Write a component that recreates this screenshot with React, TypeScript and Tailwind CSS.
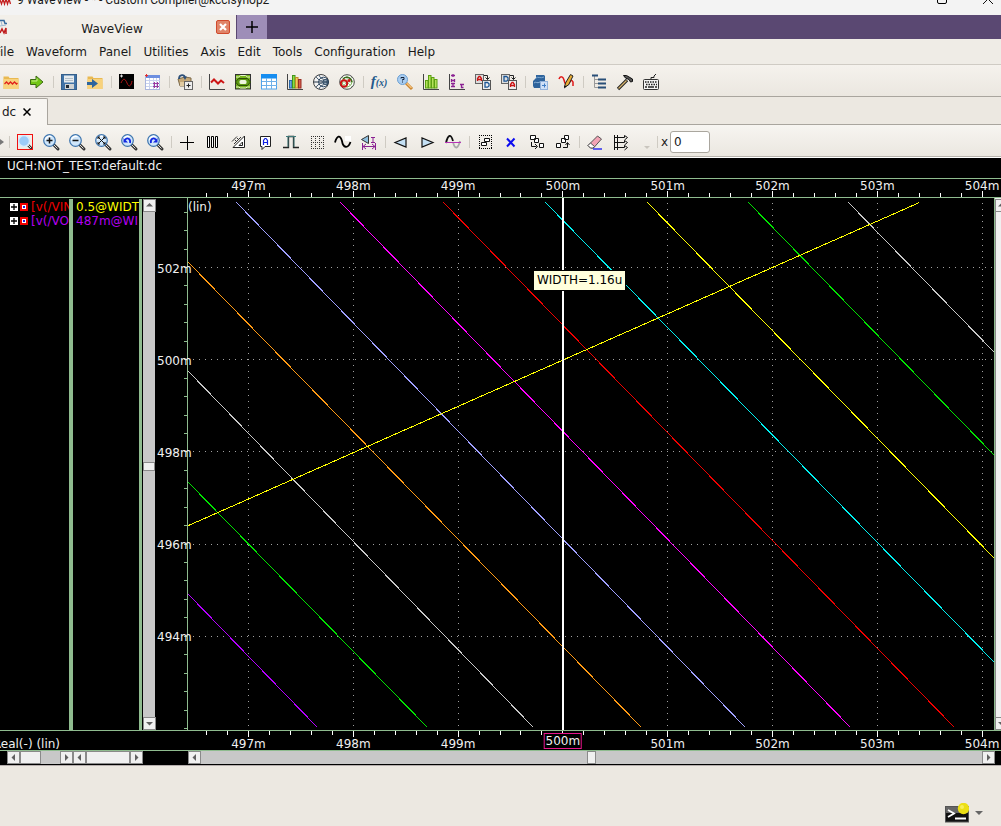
import React from "react";

type IconProps = { children: React.ReactNode };

function Icon({ children }: IconProps) {
  return (
    <svg viewBox="0 0 16 16" className="h-4 w-4 overflow-visible" fill="none" aria-hidden="true">
      {children}
    </svg>
  );
}

function Lens({ children }: { children?: React.ReactNode }) {
  return (
    <Icon>
      <path d="M10 10l5 5" stroke="#333" strokeWidth="3" strokeLinecap="round" />
      <path d="M10.5 10.5l4 4" stroke="#ddd" strokeWidth="1" />
      <circle cx="6.5" cy="6.5" r="5.8" fill="#cfe6fb" stroke="#3d74ad" strokeWidth="1.2" />
      <path d="M2.5 6a4.2 4.2 0 0 1 6-3.3" stroke="#fff" strokeWidth="1.4" />
      {children}
    </Icon>
  );
}

const folder = (
  <>
    <path d="M0.5 3V2.5h5l1 1.5H15.5V15H.5z" fill="#e9b951" />
    <path d="M0.5 5h15v10H.5z" fill="#f8d27c" />
  </>
);

const bars = (colors: string[], stroke: string[]) => (
  <Icon>
    <path d="M.5 0v15.5H16" stroke="#444" />
    <rect x="2.5" y="6.5" width="2.5" height="7.5" fill={colors[0]} stroke={stroke[0]} />
    <rect x="5.5" y="1.5" width="2.5" height="12.5" fill={colors[1]} stroke={stroke[1]} />
    <rect x="8.5" y="3.5" width="2.5" height="10.5" fill={colors[2]} stroke={stroke[2]} />
    <rect x="11.5" y="5.5" width="2.5" height="8.5" fill={colors[3]} stroke={stroke[3]} />
  </Icon>
);

const letterA = "M0 4.5V2L1.5 0h1L4 2v2.5M0 3h4";
const letterD = "M0 0h2.5L4 1.2v2.3L2.5 4.7H0z";

type Tool = { label: string; icon: React.ReactNode } | null;

const mainTools: Tool[] = [
  {
    label: "Open waveform",
    icon: (
      <Icon>
        {folder}
        <path d="M1.5 10l2-2 2 2 2-2 2 2 2-2 2 2 1-1" stroke="#e0201c" strokeWidth="1.3" />
      </Icon>
    ),
  },
  {
    label: "Import",
    icon: (
      <Icon>
        <path d="M1.5 5.5H7V2l7 6-7 6v-3.5H1.5z" fill="#73c716" stroke="#3d6b12" />
        <path d="M2.5 7H8V4.5" stroke="#c7f088" />
      </Icon>
    ),
  },
  null,
  {
    label: "Save",
    icon: (
      <Icon>
        <rect x=".5" y=".5" width="15" height="15" fill="#3f72a6" stroke="#355f8b" />
        <rect x="3" y="1.5" width="10" height="7" fill="#e6ebee" />
        <path d="M4 4.5h8M4 6.5h8" stroke="#b2bfc9" />
        <rect x="4" y="10" width="9" height="5" fill="#cfd2d2" />
        <rect x="5" y="11" width="3" height="3" fill="#202a35" />
      </Icon>
    ),
  },
  {
    label: "Load session",
    icon: (
      <Icon>
        {folder}
        <path d="M0 8h5V5l6 4.5L5 14v-3H0z" fill="#2e659d" />
      </Icon>
    ),
  },
  null,
  {
    label: "New waveview",
    icon: (
      <Icon>
        <rect x="0" y="0" width="15" height="15" fill="#000" />
        <path d="M1 2h3M2.5 .5v3" stroke="#ddd" />
        <path d="M2 9c2-5 4-5 6 0s4 3 5-2" stroke="#b01616" />
      </Icon>
    ),
  },
  {
    label: "New table",
    icon: (
      <Icon>
        <rect x=".5" y="1.5" width="14" height="14" fill="#fff" stroke="#aab5dd" />
        <rect x="1" y="1" width="14" height="3" fill="#6d8fe0" />
        <path d="M1 6.5h14M1 9.5h14M1 12.5h14M4.5 4v11M8.5 4v11M11.5 4v11" stroke="#c9d2ee" />
        <path d="M8 9.5h6M8 12.5h6M9.5 8v6M12.5 8v6" stroke="#9b3aa0" />
        <path d="M0 1.5h3M1.5 0v3" stroke="#e03030" />
      </Icon>
    ),
  },
  null,
  {
    label: "Add library",
    icon: (
      <Icon>
        <path d="M1 5l7-2 6 1v8H3z" fill="#c5a877" stroke="#7d6a4b" />
        <path d="M2 5C2 0 8 0 8 4" stroke="#2e5078" strokeWidth="1.8" />
        <path d="M6 2.500h4L8 6z" fill="#2e5078" />
        <path d="M3 8h6v4H3z" fill="#e1cba2" />
        <rect x="7.500" y="7.500" width="8" height="8" fill="#eee" stroke="#666" />
        <path d="M9.500 11.500h4M11.500 9.500v4" stroke="#222" />
      </Icon>
    ),
  },
  null,
  {
    label: "XY plot",
    icon: (
      <Icon>
        <path d="M.5 0v15.500H16" stroke="#444" />
        <path d="M2 8.500l3-3 4 4 3-3 3 2.500" stroke="#cc1515" strokeWidth="2" />
      </Icon>
    ),
  },
  {
    label: "Eye diagram",
    icon: (
      <Icon>
        <rect x=".5" y=".5" width="15" height="14.500" fill="#76b51c" stroke="#333" />
        <path d="M1 3h2.500l2-1.500h5l2 1.500H15M1 13h2.500l2 1h5l2-1H15" stroke="#e9f6cd" />
        <path d="M.5 8l3-3.500h9l3 3.500-3 3.500h-9z" fill="#5d9912" stroke="#2e4f08" />
        <rect x="4.500" y="6" width="7" height="4" rx="1.500" fill="#eef6dd" />
      </Icon>
    ),
  },
  {
    label: "Data table",
    icon: (
      <Icon>
        <rect x=".5" y="1" width="15" height="14" fill="#fff" stroke="#4fa4ec" />
        <rect x="0" y="0" width="16" height="4.500" fill="#168df0" />
        <path d="M1 7.500h15M1 11.500h15M5.500 4v11M10.500 4v11" stroke="#6fb1e8" />
      </Icon>
    ),
  },
  {
    label: "Histogram",
    icon: bars(["#6fa7de", "#8edb48", "#f5c863", "#d35c4f"], ["#2b67a8", "#43941a", "#c08d27", "#982c22"]),
  },
  {
    label: "Smith chart",
    icon: (
      <Icon>
        <circle cx="8" cy="8" r="7.500" fill="#f4f4f4" stroke="#444" />
        <path d="M.5 8h15" stroke="#234" />
        <circle cx="10.500" cy="8" r="4.800" stroke="#24405c" />
        <circle cx="12.500" cy="8" r="2.500" fill="#c7d6e4" stroke="#24405c" />
        <path d="M3 2.500c2 4 6 5 12 5M3 13.500c2-4 6-5 12-5M6 1c1 3 4 5 9 5M6 15c1-3 4-5 9-5" stroke="#3a5268" />
      </Icon>
    ),
  },
  {
    label: "Polar chart",
    icon: (
      <Icon>
        <circle cx="8" cy="8" r="7.300" fill="#fff" stroke="#4b4b4b" />
        <circle cx="8" cy="8" r="4.800" stroke="#6dac45" />
        <path d="M8 1v14M1 8h14M3 3l10 10M13 3L3 13" stroke="#a8c894" />
        <path d="M4 5c3-3 8-2 9 3" stroke="#3d6b20" strokeWidth="1.500" />
        <circle cx="5" cy="9.500" r="3.200" stroke="#cc1414" strokeWidth="2" />
        <circle cx="10" cy="6.500" r="1.500" fill="#cc1414" />
      </Icon>
    ),
  },
  null,
  {
    label: "Function",
    icon: (
      <span className="font-['Liberation_Serif',serif] text-[15px] font-bold leading-4 text-[#245a8c] italic" aria-hidden="true">
        f<span className="text-[10px]">(x)</span>
      </span>
    ),
  },
  {
    label: "Query",
    icon: (
      <Icon>
        <path d="M9 9l6 6" stroke="#c9822b" strokeWidth="3" />
        <path d="M9.500 9l5 5" stroke="#f6c37f" strokeWidth="1.300" />
        <circle cx="5.500" cy="5.500" r="5" fill="#a9cdf1" stroke="#6b9fd2" />
        <path d="M4 4.500V3.500h3v2H5.500v1M5.500 7.500v1" stroke="#14233a" />
      </Icon>
    ),
  },
  {
    label: "Spectrum",
    icon: bars(["#b5e25c", "#b5e25c", "#b5e25c", "#b5e25c"], ["#5ba012", "#5ba012", "#5ba012", "#5ba012"]),
  },
  {
    label: "Time constants",
    icon: (
      <Icon>
        <path d="M.5 0v15.500H16" stroke="#444" />
        <path d="M2 1.500h4M4 0v3M2.500 5v3M5.500 5v3M2.500 6.500h3M2 9.500h4M4 9v4M2 12.500h4" stroke="#8b2192" strokeWidth="1.300" />
        <path d="M11 10.500h4M12.500 10.500v3h2" stroke="#8b2192" strokeWidth="1.300" />
      </Icon>
    ),
  },
  {
    label: "Analog to digital",
    icon: (
      <Icon>
        <rect x=".5" y=".5" width="8" height="9" fill="#ddd" stroke="#666" />
        <g transform="translate(2.5 2.5)">
          <path d={letterA} stroke="#cc1414" strokeWidth="1.300" />
        </g>
        <path d="M9 1.500h3.500v4M10.500 3.500l2 2 2-2" stroke="#222" />
        <rect x="7.500" y="6.500" width="8" height="9" fill="#eee" stroke="#555" />
        <g transform="translate(10 8.5)">
          <path d={letterD} stroke="#1a5595" strokeWidth="1.300" />
        </g>
      </Icon>
    ),
  },
  {
    label: "Digital to analog",
    icon: (
      <Icon>
        <rect x=".5" y=".5" width="8" height="9" fill="#ddd" stroke="#666" />
        <g transform="translate(3 2.5)">
          <path d={letterD} stroke="#1a5595" strokeWidth="1.300" />
        </g>
        <path d="M9 1.500h3.500v4M10.500 3.500l2 2 2-2" stroke="#222" />
        <rect x="7.500" y="6.500" width="8" height="9" fill="#eee" stroke="#555" />
        <g transform="translate(9.5 8.5)">
          <path d={letterA} stroke="#cc1414" strokeWidth="1.300" />
        </g>
      </Icon>
    ),
  },
  null,
  {
    label: "Export view",
    icon: (
      <Icon>
        <path d="M3 1h8l1 1v7l-3 5H1l-1-2V7l3-3z" fill="#2f649c" />
        <path d="M3 4c2-2 4 1 8-1" stroke="#7ba6d0" />
        <path d="M1 9c2-2 3 1 6-1" stroke="#8fb5da" />
        <rect x="7.500" y="7.500" width="7" height="8" fill="#cfe0f7" stroke="#94b2da" />
        <path d="M9 11.500h4M11.500 9.500v4" stroke="#3f7cc4" />
      </Icon>
    ),
  },
  {
    label: "Edit waveform",
    icon: (
      <Icon>
        <path d="M0 5c1-3 4-3 5 1s2 5 4 4 3-6 5-2v4" stroke="#e01818" strokeWidth="1.500" />
        <path d="M5.500 13l1-4 5-8.500 2.500 1.500-4.500 9z" fill="#e8ad36" stroke="#222" />
        <path d="M5 14.500l.5-3 2.500 1z" fill="#111" />
      </Icon>
    ),
  },
  null,
  {
    label: "Tree",
    icon: (
      <Icon>
        <path d="M3.500 2v11.500H7M3.500 5.500H7M3.500 9.500H7" stroke="#999" />
        <path d="M1 1.500h6M7 5.500h8M7 9.500h8M7 13.500h8" stroke="#294f78" strokeWidth="2" />
      </Icon>
    ),
  },
  {
    label: "Hammer",
    icon: (
      <Icon>
        <path d="M1 15l9-9" stroke="#222" strokeWidth="3.200" />
        <path d="M1.500 14.500l8-8" stroke="#d7b36c" strokeWidth="1.300" />
        <path d="M6.500 1.500h3l6 3.500v2.500l-2 .5-1.500-2.500L8.500 4z" fill="#555" stroke="#111" />
      </Icon>
    ),
  },
  {
    label: "Keyboard",
    icon: (
      <Icon>
        <path d="M8 5V3.500h3V2l2-2" stroke="#222" />
        <rect x=".5" y="5.500" width="15" height="10" rx="1" fill="#f4f4f4" stroke="#333" />
        <path d="M2 8h12M3 10.500h11" stroke="#222" strokeWidth="1.500" strokeDasharray="1.500 1" />
        <path d="M2 13h2M5 13h6M12 13h2" stroke="#222" strokeWidth="1.500" />
      </Icon>
    ),
  },
];

const viewTools: Tool[] = [
  null,
  {
    label: "Zoom box",
    icon: (
      <Icon>
        <path d="M10 10l5 5" stroke="#333" strokeWidth="2.500" />
        <path d="M10.500 10.500l3.500 3.500" stroke="#ddd" />
        <circle cx="7" cy="7" r="5.500" fill="#9ccbf8" stroke="#d9ebfb" strokeWidth="1.500" />
        <rect x=".5" y=".5" width="15" height="15" stroke="#f01010" />
      </Icon>
    ),
  },
  { label: "Zoom in", icon: <Lens><path d="M3.500 6.500h6M6.500 3.500v6" stroke="#111" strokeWidth="1.500" /></Lens> },
  { label: "Zoom out", icon: <Lens><path d="M3.500 6.500h6" stroke="#111" strokeWidth="1.500" /></Lens> },
  {
    label: "Zoom fit",
    icon: (
      <Lens>
        <path d="M3 3l7 7M10 3l-7 7M3 5V3h2M8 3h2v2M10 8v2H8M5 10H3V8" stroke="#111" />
      </Lens>
    ),
  },
  {
    label: "Previous zoom",
    icon: (
      <Lens>
        <path d="M4 6c2-3 6-1.500 5 3" stroke="#1226e0" strokeWidth="1.800" />
        <path d="M2.500 4v4.500H7z" fill="#1226e0" />
      </Lens>
    ),
  },
  {
    label: "Next zoom",
    icon: (
      <Lens>
        <path d="M9 6C7 3 3 4.500 4 9" stroke="#1226e0" strokeWidth="1.800" />
        <path d="M10.500 4v4.500H6z" fill="#1226e0" />
      </Lens>
    ),
  },
  null,
  { label: "Cursor", icon: <Icon><path d="M1 8.500h14M8.500 1.500v14" stroke="#000" shapeRendering="crispEdges" /></Icon> },
  {
    label: "Columns",
    icon: (
      <Icon>
        <path d="M2.500 2.500h2v11h-2zM6.500 2.500h2v11h-2zM10.500 2.500h2v11h-2z" fill="#fff" stroke="#000" />
      </Icon>
    ),
  },
  {
    label: "Measure",
    icon: (
      <Icon>
        <path d="M2 13.500h11.500V2z" fill="#fff" stroke="#222" />
        <path d="M8 11.500h3.500V8z" stroke="#222" />
        <path d="M1 7.500l5-5M3 10l7-7M4 6l2 2M6 4l2 2" stroke="#333" />
      </Icon>
    ),
  },
  {
    label: "Annotate",
    icon: (
      <Icon>
        <path d="M3.500 2.500h10v10H8l-3 3v-3H3.500z" fill="#fff" stroke="#222" />
        <path d="M6.500 11V6.500L8 4.500h1l1.500 2V11M6.500 8.500h4" stroke="#1020e0" strokeWidth="1.200" />
      </Icon>
    ),
  },
  {
    label: "Pulse",
    icon: (
      <Icon>
        <path d="M0 13.500h5.500V2.500h5v11H16" stroke="#222" strokeWidth="1.300" />
        <path d="M3 2.500h10M5 2v11M11 2v11" stroke="#407878" />
      </Icon>
    ),
  },
  {
    label: "Grid",
    icon: (
      <Icon>
        <path d="M2 2.500h14M2 8.500h14M2 14.500h14" stroke="#333" strokeDasharray="1 1" shapeRendering="crispEdges" />
        <path d="M2 4.500h14M2 6.500h14M2 10.500h14M2 12.500h14" stroke="#333" strokeDasharray="1 3" shapeRendering="crispEdges" />
      </Icon>
    ),
  },
  {
    label: "Sine",
    icon: (
      <Icon>
        <rect x="10" y="2" width="6" height="5" fill="#fff" />
        <path d="M0 8.500c2-7 5-8 7-1.500 1 7 6 8 8.500 1" stroke="#000" strokeWidth="1.800" />
      </Icon>
    ),
  },
  {
    label: "Marker distance",
    icon: (
      <Icon>
        <path d="M.5 5.500l7-4v8z" fill="#8fc0e0" stroke="#333" />
        <path d="M10 3.500h4M12 3.500v5M10 8.500h4" stroke="#8b2192" />
        <path d="M1.500 9v7M14.500 9v7M2 12.500h12M5 10l-3 2.500L5 15M11 10l3 2.500-3 2.500" stroke="#8b2192" />
      </Icon>
    ),
  },
  null,
  { label: "Previous edge", icon: <Icon><path d="M2 8.500L13 4v9z" fill="#c4e0f4" stroke="#111" strokeWidth="1.200" /></Icon> },
  { label: "Next edge", icon: <Icon><path d="M14 8.500L3 4v9z" fill="#c4e0f4" stroke="#111" strokeWidth="1.200" /></Icon> },
  {
    label: "Level",
    icon: (
      <Icon>
        <path d="M1 9C3 0 6 0 8 7" stroke="#111" strokeWidth="1.800" />
        <path d="M8 8c2 8 5 7 7-1" stroke="#aaa" strokeWidth="1.800" />
        <path d="M0 8.500h16" stroke="#b832b8" />
      </Icon>
    ),
  },
  null,
  {
    label: "Select group",
    icon: (
      <Icon>
        <path d="M2 1.500h13M2 14.500h13M2.500 1v14M14.500 1v14" stroke="#000" strokeDasharray="1 1" shapeRendering="crispEdges" />
        <path d="M7.500 4.500h5v3h-5zM4.500 8.500h5v3h-5z" fill="#fff" stroke="#111" />
      </Icon>
    ),
  },
  { label: "Delete", icon: <Icon><path d="M4 4.500l7.500 8M11.500 4.500l-7.500 8" stroke="#0c0cf0" strokeWidth="2" /></Icon> },
  {
    label: "Group",
    icon: (
      <Icon>
        <path d="M1.500 1.500h5v4h-5zM5.500 4.500h4v4h-4zM10.500 9.500h4v4h-4z" fill="#fff" stroke="#111" />
        <path d="M2.500 8v4.500h5M6 10l2.500 2.500L6 15" stroke="#111" />
      </Icon>
    ),
  },
  {
    label: "Ungroup",
    icon: (
      <Icon>
        <path d="M9.500 1.500h4v4h-4zM6.500 4.500h4v4h-4zM1.500 9.500h4v4h-4z" fill="#fff" stroke="#111" />
        <path d="M8 13.500h4.500V9M10.500 11l2-2.500 2 2.500" stroke="#111" />
      </Icon>
    ),
  },
  null,
  {
    label: "Erase",
    icon: (
      <Icon>
        <path d="M1 11.500L10.500 2l4 3-8 9H3.500z" fill="#f3a3b4" stroke="#555" />
        <path d="M1 11.500l2.500-2.500 4 3.500-1.500 1.500H3.500z" fill="#fff" stroke="#555" />
        <path d="M6 15h9" stroke="#1414f0" strokeWidth="1.300" />
      </Icon>
    ),
  },
  {
    label: "Bus",
    icon: (
      <Icon>
        <path d="M1.500 1v15M4.500 1v15" stroke="#111" />
        <path d="M1 3.500h10.500V1.500l3 2-3 2.500M1 8.500h10.500v-2l3 2-3 2.500M1 13.500h10.500v-2l3 2-3 2.500" stroke="#111" />
      </Icon>
    ),
  },
];

function Tools({ tools }: { tools: Tool[] }) {
  return (
    <>
      {tools.map((tool, i) =>
        tool ? (
          <button key={i} type="button" aria-label={tool.label} className="flex h-6 w-[26px] shrink-0 items-center justify-center">
            {tool.icon}
          </button>
        ) : (
          <Divider key={i} />
        ),
      )}
    </>
  );
}

function Divider() {
  return (
    <span className="flex h-3 w-[6px] shrink-0 justify-center">
      <span className="w-px bg-[#cfcbc3]" />
    </span>
  );
}

const PLOT_W = 806;
const PLOT_H = 532;
const xLabels = ["497m", "498m", "499m", "500m", "501m", "502m", "503m", "504m"];
const yLabels = ["502m", "500m", "498m", "496m", "494m"];
const xStep = 104.8;
const yStep = 92.2;
const xAt = (i: number) => 60.5 + i * xStep;
const yAt = (i: number) => 69.5 + i * yStep;
const xMinor = Array.from({ length: 39 }, (_, i) => i - 2).filter((i) => i <= 35);
const yMinor = Array.from({ length: 29 }, (_, i) => i - 3).filter((i) => yAt(i / 5) < PLOT_H);

const traces: [string, number, number, number, number][] = [
  ["#b400ff", 0, 396, 129, 529],
  ["#00e400", 0, 284, 239, 529],
  ["#c8c8c8", 0, 173, 345, 529],
  ["#ff9a14", 0, 64, 453, 529],
  ["#a0a0ff", 48, 4, 557, 529],
  ["#ff00ff", 152, 4, 662, 529],
  ["#f00000", 255, 4, 766, 529],
  ["#00f0f0", 357, 4, 806, 464],
  ["#ffff00", 459, 4, 806, 360],
  ["#00e400", 560, 4, 806, 257],
  ["#c8c8c8", 660, 4, 806, 154],
  ["#ffff00", 0, 327, 731, 4],
];

function Plot() {
  return (
    <svg
      viewBox={`0 0 ${PLOT_W} ${PLOT_H}`}
      preserveAspectRatio="none"
      className="absolute inset-0 h-full w-full"
      shapeRendering="crispEdges"
      role="img"
      aria-label="DC sweep waveforms"
    >
      {xLabels.map((_, i) => (
        <path key={i} d={`M${Math.floor(xAt(i)) + 0.5} 5V528`} stroke="#a0a0a0" strokeDasharray="1 5" />
      ))}
      {yLabels.map((_, i) => (
        <path key={i} d={`M5 ${Math.floor(yAt(i)) + 0.5}H806`} stroke="#a0a0a0" strokeDasharray="1 5" />
      ))}
      {traces.map(([color, x1, y1, x2, y2], i) => (
        <line key={i} x1={x1 + 0.5} y1={y1 + 0.5} x2={x2 + 0.5} y2={y2 + 0.5} stroke={color} />
      ))}
      <rect x="374" y="0" width="2" height={PLOT_H} fill="#fff" />
    </svg>
  );
}

function XAxis({ bottom = false }: { bottom?: boolean }) {
  return (
    <div className="relative mr-[7px] min-w-0 flex-1">
      <svg
        viewBox={`0 0 ${PLOT_W} 6`}
        preserveAspectRatio="none"
        className={`absolute left-0 h-[6px] w-full ${bottom ? "top-0" : "bottom-0"}`}
        shapeRendering="crispEdges"
        aria-hidden="true"
      >
        {xMinor.map((i) => {
          const len = i % 5 === 0 ? 6 : 4;
          return (
            <rect key={i} x={Math.floor(xAt(i / 5))} y={bottom ? 0 : 6 - len} width="1" height={len} fill="#fff" />
          );
        })}
      </svg>
      {xLabels.map((label, i) => {
        const marked = bottom && label === "500m";
        return (
          <span
            key={label}
            className={`absolute -translate-x-1/2 leading-[14px] ${
              marked
                ? "top-[2px] border border-[#e8148c] bg-black px-px"
                : bottom
                  ? "top-[6px]"
                  : "top-0"
            }`}
            style={{ left: `${(xAt(i) / PLOT_W) * 100}%` }}
          >
            {label}
          </span>
        );
      })}
    </div>
  );
}

function YAxis() {
  return (
    <div className="relative z-10 w-[33px] shrink-0 border-r border-[#8fbc8f]">
      <svg
        viewBox={`0 0 3 ${PLOT_H}`}
        preserveAspectRatio="none"
        className="absolute right-0 top-0 h-full w-[3px]"
        shapeRendering="crispEdges"
        aria-hidden="true"
      >
        {yMinor.map((i) => (
          <rect key={i} x="0" y={Math.floor(yAt(i / 5))} width="3" height="1" fill="#8fbc8f" />
        ))}
      </svg>
      {yLabels.map((label, i) => (
        <span
          key={label}
          className="absolute left-0.5 -translate-y-1/2 leading-[14px]"
          style={{ top: `${((yAt(i) + 1) / PLOT_H) * 100}%` }}
        >
          {label}
        </span>
      ))}
    </div>
  );
}

const arrowPaths = {
  up: "M2 6.500h7L5.500 3z",
  down: "M2 4h7L5.500 7.500z",
  left: "M7 2v7L3.500 5.500z",
  right: "M4 2v7l3.500-3.500z",
};

function ArrowButton({ dir }: { dir: keyof typeof arrowPaths }) {
  return (
    <button
      type="button"
      aria-label={`Scroll ${dir}`}
      className="flex h-[13px] w-[13px] shrink-0 items-center justify-center border border-[#8a8a8a] bg-[#f0f0f0]"
    >
      <svg viewBox="0 0 11 11" className="h-[11px] w-[11px] shrink-0" aria-hidden="true">
        <path d={arrowPaths[dir]} fill="#606060" />
      </svg>
    </button>
  );
}

const signals = [
  { name: "[v(/VIN", value: "0.5@WIDT", nameColor: "text-[#f00000]", valueColor: "text-[#ffff00]" },
  { name: "[v(/VOU", value: "487m@WI", nameColor: "text-[#b400f0]", valueColor: "text-[#b400f0]" },
];

function SignalPane() {
  return (
    <div className="flex w-[155px] shrink-0 pt-px">
      <div className="w-[69px] shrink-0 overflow-hidden pl-[10px] pt-px">
        {signals.map((s) => (
          <div key={s.name} className={`flex h-[14px] items-center whitespace-nowrap ${s.nameColor}`}>
            <button type="button" aria-label={`Expand ${s.name}`} className="shrink-0">
              <svg viewBox="0 0 8 8" className="h-2 w-2" aria-hidden="true">
                <rect width="8" height="8" fill="#fff" />
                <path d="M1 4h6M4 1v6" stroke="#000" strokeWidth="1.300" />
              </svg>
            </button>
            <svg viewBox="0 0 8 8" className="ml-0.5 mr-[3px] h-2 w-2 shrink-0" aria-hidden="true">
              <rect width="8" height="8" fill="#f00000" />
              <rect x="2" y="2" width="4" height="4" fill="#fff" />
              <rect x="3" y="3" width="2" height="2" fill="#2020e0" />
            </svg>
            <span className="leading-[14px]">{s.name}</span>
          </div>
        ))}
      </div>
      <div className="w-1 shrink-0 bg-[#8fbc8f]" />
      <div className="w-[66px] shrink-0 overflow-hidden pl-[3px] pt-px">
        {signals.map((s) => (
          <div key={s.value} className={`h-[14px] whitespace-nowrap leading-[14px] ${s.valueColor}`}>
            {s.value}
          </div>
        ))}
      </div>
      <div className="w-[3px] shrink-0 bg-[#8fbc8f]" />
      <div className="ml-px flex w-3 flex-col bg-[#c8c8c8]">
        <ArrowButton dir="up" />
        <div className="flex flex-1 flex-col justify-center pt-1">
          <div className="h-[9px] border border-[#8a8a8a] bg-[#f0f0f0]" />
        </div>
        <ArrowButton dir="down" />
      </div>
    </div>
  );
}

function Thumb({ className }: { className: string }) {
  return <div className={`h-[13px] shrink-0 border border-[#8a8a8a] bg-[#f0f0f0] ${className}`} />;
}

const menus = ["File", "Waveform", "Panel", "Utilities", "Axis", "Edit", "Tools", "Configuration", "Help"];

export default function App() {
  return (
    <div className="flex h-screen flex-col overflow-hidden bg-[#ece8e1] font-['DejaVu_Sans',sans-serif] text-[12px] text-[#1a1a1a]">
      <header className="flex h-[15px] shrink-0 items-start overflow-hidden bg-[#f3f3f3] pr-2">
        <svg viewBox="0 0 12 12" className="-mt-1 h-3 w-3 shrink-0" fill="none" aria-hidden="true">
          <path d="M0 4l1.500 4L3 3l1.500 5L6 3l1.500 5L9 3l1.500 5" stroke="#c42020" strokeWidth="1.300" />
        </svg>
        <h1 className="-mt-2 ml-[5px] flex-1 whitespace-nowrap font-['Roboto',sans-serif] text-[12px] leading-[16px]">
          9 WaveView - * - Custom Compiler@kcclsynop2
        </h1>
        <button type="button" aria-label="Maximize" className="-mt-[6px] mr-9 h-[10px] w-[10px] rounded-[2px] border border-black" />
        <button type="button" aria-label="Close window" className="-mt-[6px]">
          <svg viewBox="0 0 10 10" className="h-[10px] w-[10px]" aria-hidden="true">
            <path d="M0 0l10 10M10 0L0 10" stroke="#111" />
          </svg>
        </button>
      </header>

      <div className="flex h-6 shrink-0 bg-[#5a4872]">
        <div className="flex w-[236px] items-center bg-[#f2efe9] pr-[6px]">
          <svg viewBox="0 0 8 16" className="h-4 w-2 shrink-0" fill="none" aria-hidden="true">
            <path d="M0 1.500h4l1 3h2" stroke="#356a9e" strokeWidth="1.500" />
            <path d="M1 2l1 4M0 7l6-1" stroke="#9bb7d0" />
            <path d="M0 14l2-4 2 4 2-5v6" stroke="#c01c1c" strokeWidth="1.500" />
          </svg>
          <span className="flex-1 pt-1 text-center">WaveView</span>
          <button type="button" aria-label="Close WaveView" className="flex h-[14px] w-[14px] items-center justify-center rounded-[2px] border border-[#d04a2c] bg-[#e08468]">
            <svg viewBox="0 0 8 8" className="h-2 w-2" aria-hidden="true">
              <path d="M1 1l6 6M7 1L1 7" stroke="#fff" strokeWidth="2.200" />
            </svg>
          </button>
        </div>
        <button type="button" aria-label="New tab" className="ml-px flex w-[30px] items-center justify-center bg-[#9e8eb8]">
          <svg viewBox="0 0 12 12" className="h-3 w-3" aria-hidden="true">
            <path d="M0 6h12M6 0v12" stroke="#000" strokeWidth="1.500" />
          </svg>
        </button>
      </div>

      <nav className="flex h-[26px] shrink-0 items-center gap-3 border-b border-[#cfcbc4] bg-[#efece6]">
        {menus.map((m) => (
          <button key={m} type="button" className="whitespace-nowrap first:-ml-[6px]">
            {m}
          </button>
        ))}
      </nav>

      <div className="flex h-8 shrink-0 items-center border-b border-[#a9a59e] bg-gradient-to-b from-[#f5f2ed] to-[#ebe7e0] pt-0.5">
        <div className="-ml-0.5 flex items-center">
          <Tools tools={mainTools} />
        </div>
      </div>

      <div className="flex h-7 shrink-0 border-b border-[#a9a59e] pt-px">
        <div className="-mb-px flex w-12 items-center gap-[7px] rounded-tr-[2px] border-r border-t border-[#a9a59e] bg-[#f7f5f1] pl-[2px]">
          <span>dc</span>
          <button type="button" aria-label="Close dc">
            <svg viewBox="0 0 8 8" className="h-2 w-2" aria-hidden="true">
              <path d="M.5 .5l7 7M7.500 .5l-7 7" stroke="#000" strokeWidth="1.500" />
            </svg>
          </button>
        </div>
      </div>

      <div className="flex h-8 shrink-0 items-center border-b border-[#b8b4ad] bg-gradient-to-b from-[#f7f5f1] to-[#ebe7e0] pt-0.5">
        <button type="button" aria-label="More" className="w-[6px] shrink-0">
          <svg viewBox="0 0 4 6" className="h-[6px] w-1" aria-hidden="true">
            <path d="M0 0l4 3-4 3z" fill="#777" />
          </svg>
        </button>
        <Tools tools={viewTools} />
        <button type="button" aria-label="Bus options" className="flex w-5 shrink-0 justify-center pl-[6px] pt-3">
          <svg viewBox="0 0 6 3" className="h-[3px] w-[6px]" aria-hidden="true">
            <path d="M0 0h6L3 3z" fill="#c9c5be" />
          </svg>
        </button>
        <Divider />
        <label htmlFor="x-value" className="pl-px pr-[2px]">
          x
        </label>
        <input
          id="x-value"
          defaultValue="0"
          className="h-[22px] w-10 rounded-[3px] border border-[#aaa69e] bg-white px-[3px] text-[12px] outline-none"
        />
      </div>

      <main className="flex min-h-0 flex-1 flex-col border-t border-white bg-black text-[#f0f0f0]">
        <div className="h-[21px] shrink-0 border-b border-[#8fbc8f] pl-[7px] leading-4">UCH:NOT_TEST:default:dc</div>
        <div className="flex h-[19px] shrink-0 border-b border-[#8fbc8f] pl-[188px]">
          <XAxis />
        </div>

        <div className="flex min-h-0 flex-1">
          <SignalPane />
          <div className="flex min-w-0 flex-1">
            <YAxis />
            <div className="relative min-w-0 flex-1">
              <Plot />
              <span className="absolute left-0 top-0.5 leading-[14px]">(lin)</span>
              <div
                role="tooltip"
                className="absolute left-[42.8%] top-[13.6%] border border-black bg-[#ffffdc] px-[3px] leading-[19px] text-black"
              >
                WIDTH=1.16u
              </div>
            </div>
          </div>
          <div className="flex w-[7px] shrink-0 flex-col overflow-hidden border-l border-[#8fbc8f] bg-[#f0f0f0] pt-px">
            <ArrowButton dir="up" />
            <div className="flex-1 border-l border-[#8a8a8a]" />
            <ArrowButton dir="down" />
          </div>
        </div>

        <div className="flex h-[21px] shrink-0 border-y border-[#8fbc8f]">
          <div className="w-[188px] shrink-0 overflow-hidden whitespace-nowrap pt-[6px] leading-[14px]">
            <span className="-ml-[7px]">Real(-) (lin)</span>
          </div>
          <XAxis bottom />
        </div>

        <div className="flex h-[14px] shrink-0 items-start pl-[7px] pr-[6px]">
          <div className="flex h-[13px] w-[66px] shrink-0 bg-[#c8c8c8]">
            <ArrowButton dir="left" />
            <Thumb className="w-[21px]" />
            <span className="flex-1" />
            <ArrowButton dir="right" />
          </div>
          <div className="flex h-[13px] w-[70px] shrink-0 bg-[#c8c8c8]">
            <ArrowButton dir="left" />
            <Thumb className="flex-1" />
            <ArrowButton dir="right" />
          </div>
          <div className="ml-[45px] flex h-[13px] min-w-0 flex-1 justify-between bg-[#c8c8c8]">
            <ArrowButton dir="left" />
            <Thumb className="w-[9px]" />
            <ArrowButton dir="right" />
          </div>
        </div>
      </main>

      <footer className="flex h-[61px] shrink-0 items-end justify-end gap-[6px] border-t border-[#b5aead] pb-[3px] pr-[18px]">
        <button type="button" aria-label="Console">
          <svg viewBox="0 0 24 20" className="h-5 w-6" fill="none" aria-hidden="true">
            <rect x=".5" y="3.500" width="23" height="15.500" fill="#111" stroke="#555" />
            <path d="M1 4h22v6H1z" fill="#666" />
            <path d="M3 7l6 3.500-6 3.500" stroke="#fff" strokeWidth="1.800" />
            <path d="M10 15.500h11" stroke="#fff" strokeWidth="2" />
            <circle cx="18.500" cy="5.500" r="5.700" fill="#ecdf14" />
            <circle cx="17" cy="4" r="2" fill="#f7ee5a" />
          </svg>
        </button>
        <button type="button" aria-label="Console options" className="pb-2">
          <svg viewBox="0 0 8 4" className="h-1 w-2" aria-hidden="true">
            <path d="M0 0h8L4 4z" fill="#666" />
          </svg>
        </button>
      </footer>
    </div>
  );
}
